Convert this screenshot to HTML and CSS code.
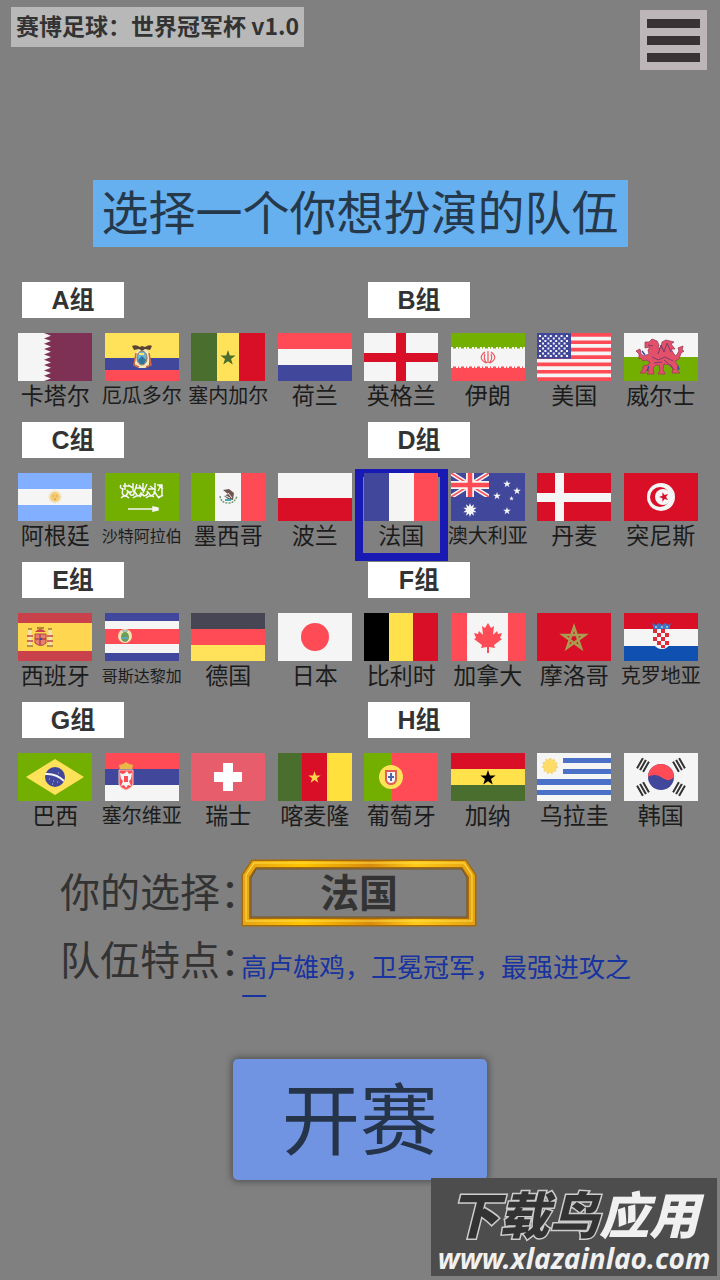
FILE: index.html
```html
<!DOCTYPE html>
<html lang="zh-CN">
<head>
    <meta charset="UTF-8">
    <meta name="viewport" content="width=device-width, initial-scale=1.0">
    <title>赛博足球：世界冠军杯</title>
    <link rel="stylesheet" href="styles.css">
</head>
<body>
    <!-- shared shapes for the flags -->
    <svg class="defs" aria-hidden="true">
        <symbol id="star" viewBox="-10 -10 20 20">
            <path d="M0-10 2.3-3.2 9.5-3.1 3.8 1.2 5.9 8.1 0 4-5.9 8.1-3.8 1.2-9.5-3.1-2.3-3.2Z"/>
        </symbol>
        <symbol id="trigram" viewBox="0 0 12 10">
            <path d="M0 1.5h12M0 5h12M0 8.5h12" stroke="#333" stroke-width="2"/>
        </symbol>
    </svg>

    <header class="topbar">
        <div class="version">赛博足球：世界冠军杯 v1.0</div>
        <button class="menu" type="button" aria-label="菜单">
            <span></span><span></span><span></span>
        </button>
    </header>

    <main>
        <h1 class="title">选择一个你想扮演的队伍</h1>

        <div class="groups">
            <section class="group">
                <h2>A组</h2>
                <div class="teams">
                    <button class="team" type="button">
                        <svg class="flag" viewBox="0 0 74 48"><path fill="#f5f5f5" d="M0 0h74v48H0z"/><path fill="#7f3055" d="M74 0H26l7 2.7-7 2.7 7 2.7-7 2.6 7 2.7-7 2.6 7 2.7-7 2.7 7 2.6-7 2.7 7 2.7-7 2.6 7 2.7-7 2.7 7 2.6-7 2.7 7 2.7-7 2.6H74z"/></svg>
                        <span>卡塔尔</span>
                    </button>
                    <button class="team" type="button">
                        <svg class="flag" viewBox="0 0 74 48"><path fill="#ffe15a" d="M0 0h74v25H0z"/><path fill="#41479b" d="M0 25h74v12H0z"/><path fill="#ff4b55" d="M0 37h74v11H0z"/><path fill="#f3e6c0" d="M30 21l4-5h7l4 5-1 12-4 2h-6l-4-2z"/><path d="M27 13q4-2 8 1l2-1 3 1q4-3 7-1l-2 4-5-1-3 2-3-2-5 1z" fill="#594437"/><path d="M31 20l-2 12 5 2M44 20l2 12-5 2" fill="none" stroke="#d06642" stroke-width="1.5"/><ellipse cx="37" cy="25" rx="5" ry="7" fill="#69b5dc" stroke="#967443" stroke-width="1"/><path d="M33 27l4-4 4 4-2 4h-4z" fill="#31739a"/><path d="M34 21h5" stroke="#ffe15a" stroke-width="2"/></svg>
                        <span class="len4">厄瓜多尔</span>
                    </button>
                    <button class="team" type="button">
                        <svg class="flag" viewBox="0 0 74 48"><path fill="#496e2d" d="M0 0h26v48H0z"/><path fill="#ffe15a" d="M26 0h22v48H26z"/><path fill="#d80f27" d="M48 0h26v48H48z"/><use href="#star" x="29" y="17" width="16" height="16" fill="#496e2d"/></svg>
                        <span class="len4">塞内加尔</span>
                    </button>
                    <button class="team" type="button">
                        <svg class="flag" viewBox="0 0 74 48"><path fill="#ff4b55" d="M0 0h74v16H0z"/><path fill="#f5f5f5" d="M0 16h74v16H0z"/><path fill="#41479b" d="M0 32h74v16H0z"/></svg>
                        <span>荷兰</span>
                    </button>
                </div>
            </section>

            <section class="group">
                <h2>B组</h2>
                <div class="teams">
                    <button class="team" type="button">
                        <svg class="flag" viewBox="0 0 74 48"><path fill="#f5f5f5" d="M0 0h74v48H0z"/><path fill="#d80f27" d="M32 0h10v48H32zM0 20h74v9H0z"/></svg>
                        <span>英格兰</span>
                    </button>
                    <button class="team" type="button">
                        <svg class="flag" viewBox="0 0 74 48"><path fill="#f5f5f5" d="M0 0h74v48H0z"/><path fill="#73af00" d="M0 0h74v14H0z"/><path fill="#ff4b55" d="M0 35h74v13H0z"/><path d="M2 14.500h70" stroke="#73af00" stroke-width="2" stroke-dasharray="3 2 1 2"/><path d="M2 34.500h70" stroke="#ff4b55" stroke-width="2" stroke-dasharray="3 2 1 2"/><path d="M37 18v12M34 19q-8 6 1 11M40 19q8 6-1 11M34 21q-2 6 2 9M40 21q2 6-2 9" fill="none" stroke="#ee5960" stroke-width="1.200"/></svg>
                        <span>伊朗</span>
                    </button>
                    <button class="team" type="button">
                        <svg class="flag" viewBox="0 0 74 48"><path fill="#f5f5f5" d="M0 0h74v48H0z"/><path fill="#ff4b55" d="M0 0h74v3.700H0zM0 7.400h74v3.700H0zM0 14.800h74v3.700H0zM0 22.200h74v3.700H0zM0 29.500h74v3.700H0zM0 36.900h74v3.700H0zM0 44.300h74V48H0z"/><path fill="#41479b" d="M0 0h34v25.800H0z"/><path d="M2 3h31M2 8h31M2 13h31M2 18h31M2 23h31" stroke="#f5f5f5" stroke-width="2" stroke-dasharray="2 3.400"/><path d="M5 5.500h26M5 10.500h26M5 15.500h26M5 20.500h26" stroke="#f5f5f5" stroke-width="1.800" stroke-dasharray="2 3.400"/></svg>
                        <span>美国</span>
                    </button>
                    <button class="team" type="button">
                        <svg class="flag" viewBox="0 0 74 48"><path fill="#f5f5f5" d="M0 0h74v24H0z"/><path fill="#73af00" d="M0 24h74v24H0z"/><path fill="#e3506a" stroke="#a03a58" stroke-width=".8" d="M21 9l4 0 3-3 5 2 2 4-1 3 3 0 1-6 4-2 8 2-3 2 4 5-4 0 3 5 2 2 3-5-1-3 5-2-1 4 2 1-3 2-2 6-4 2 3 5-1 4 3 3h-8l1-4-4-4-5-1-1 5 2 5h-7l2-4-1-5-3 0-3 3 1 6h-7l2-3-1-2-3 4h-5l3-4 0-3 5-1 2-3-4-2-3 1-2-3-2 1 0-5-3-3 4-2 1 5 3 2 5-2-1-4 2-3-5 1z"/><path d="M34 21l3-9 3 7 3-9 4 9M28 24l6 3 7-3 8 4M24 12l5 1M30 30l8-1M46 31l4 6M40 27l5 4" stroke="#7e3a6a" fill="none"/><path d="M18 18l3 4M25 33l-2 5M54 33l1 4" stroke="#41479b" stroke-width="1.500"/></svg>
                        <span>威尔士</span>
                    </button>
                </div>
            </section>

            <section class="group">
                <h2>C组</h2>
                <div class="teams">
                    <button class="team" type="button">
                        <svg class="flag" viewBox="0 0 74 48"><path fill="#82afff" d="M0 0h74v48H0z"/><path fill="#f5f5f5" d="M0 16h74v16H0z"/><circle cx="37" cy="24" r="5" fill="#f2cb72"/><circle cx="37" cy="24" r="6" fill="none" stroke="#f2cb72" stroke-dasharray="1 1"/><path d="M35 23h1M38 23h1M36 26h2" stroke="#c88d36"/></svg>
                        <span>阿根廷</span>
                    </button>
                    <button class="team" type="button">
                        <svg class="flag" viewBox="0 0 74 48"><path fill="#73af00" d="M0 0h74v48H0z"/><g fill="none" stroke="#f5f5f5" stroke-width="1.500"><path d="M16 12q-2 3 2 4-2 6 2 7 4-2 2-6l4 5q4 1 3-4l3 4q3 2 4-2l3 3q5-1 3-5l4 5q4-1 3-5l4 6 4-1V12M20 10v7M23 12l5 3M28 10v9M32 11l-3 9M34 12l4 6M38 10v8M42 11l-4 9M45 13l5 4M50 10v11M54 13l4 3M57 11l-4 7M16 25q4-4 8 0M28 25q5-4 8-1M41 25q4-4 8-1M53 25l5-3M18 13h6M31 15h5M43 16h5M52 12h4M34 22h5M24 19h3"/><path d="M23 36h27"/><path d="M48 34v4l5-1v-2z" fill="#f5f5f5"/></g></svg>
                        <span class="len5">沙特阿拉伯</span>
                    </button>
                    <button class="team" type="button">
                        <svg class="flag" viewBox="0 0 74 48"><path fill="#73af00" d="M0 0h24v48H0z"/><path fill="#f5f5f5" d="M24 0h26v48H24z"/><path fill="#ff4b55" d="M50 0h24v48H50z"/><path d="M32 17l6-1 5 4-1 7-5-1-4-3 4-2z" fill="#6d5550"/><path d="M37 20l4 5M33 22l6 3" stroke="#eee"/><path d="M29 23q1 7 8 7t9-7" fill="none" stroke="#719c74" stroke-width="1.500" stroke-dasharray="2 1"/><path d="M34 27h6" stroke="#45a7b0" stroke-width="2"/></svg>
                        <span>墨西哥</span>
                    </button>
                    <button class="team" type="button">
                        <svg class="flag" viewBox="0 0 74 48"><path fill="#f5f5f5" d="M0 0h74v25H0z"/><path fill="#d80f27" d="M0 25h74v23H0z"/></svg>
                        <span>波兰</span>
                    </button>
                </div>
            </section>

            <section class="group">
                <h2>D组</h2>
                <div class="teams">
                    <button class="team selected" type="button" aria-pressed="true">
                        <svg class="flag" viewBox="0 0 74 48"><path fill="#41479b" d="M0 0h25v48H0z"/><path fill="#f5f5f5" d="M25 0h25v48H25z"/><path fill="#ff4b55" d="M50 0h24v48H50z"/></svg>
                        <span>法国</span>
                    </button>
                    <button class="team" type="button">
                        <svg class="flag" viewBox="0 0 74 48"><path fill="#41479b" d="M0 0h74v48H0z"/><svg width="38" height="24" viewBox="0 0 38 24"><path d="M0 0l38 24M38 0L0 24" stroke="#f5f5f5" stroke-width="4.500"/><path d="M0 0l38 24M38 0L0 24" stroke="#ff4b55" stroke-width="1.500"/><path d="M19 0v24M0 12h38" stroke="#f5f5f5" stroke-width="8"/><path d="M19 0v24M0 12h38" stroke="#ff4b55" stroke-width="4.500"/></svg><g fill="#f5f5f5"><use href="#star" x="12" y="30" width="14" height="14"/><use href="#star" transform="rotate(36 19 37)" x="12" y="30" width="14" height="14"/><use href="#star" x="52" y="7" width="8" height="8"/><use href="#star" x="42" y="19" width="8" height="8"/><use href="#star" x="62" y="14" width="8" height="8"/><use href="#star" x="58" y="23" width="5" height="5"/><use href="#star" x="52" y="34" width="8" height="8"/></g></svg>
                        <span class="len4">澳大利亚</span>
                    </button>
                    <button class="team" type="button">
                        <svg class="flag" viewBox="0 0 74 48"><path fill="#d80f27" d="M0 0h74v48H0z"/><path fill="#f5f5f5" d="M18 0h9v48h-9zM0 20h74v9H0z"/></svg>
                        <span>丹麦</span>
                    </button>
                    <button class="team" type="button">
                        <svg class="flag" viewBox="0 0 74 48"><path fill="#d80f27" d="M0 0h74v48H0z"/><circle cx="37" cy="24" r="14" fill="#f5f5f5"/><circle cx="36" cy="24" r="10" fill="#d80f27"/><circle cx="39" cy="24" r="8" fill="#f5f5f5"/><use href="#star" transform="rotate(-18 40 24)" x="35" y="19" width="10" height="10" fill="#d80f27"/></svg>
                        <span>突尼斯</span>
                    </button>
                </div>
            </section>

            <section class="group">
                <h2>E组</h2>
                <div class="teams">
                    <button class="team" type="button">
                        <svg class="flag" viewBox="0 0 74 48"><path fill="#c8414b" d="M0 0h74v48H0z"/><path fill="#ffd64f" d="M0 10h74v28H0z"/><path d="M17 21h11v9q-5 5-11 0z" fill="#e58072" stroke="#b4464c"/><path d="M22 21v11M17 26h11" stroke="#b4464c" stroke-width="1.500"/><path d="M17 19q5-6 11 0z" fill="#c8414b"/><path d="M19 15h7" stroke="#b18436" stroke-width="2"/><path d="M12 17v16M32 17v16" stroke="#efe4b8" stroke-width="3"/><path d="M9 23h6M9 28h6M29 23h6M29 28h6" stroke="#c8414b" stroke-width="1.500"/><path d="M9 33h6M29 33h6M10 16h4M30 16h4" stroke="#a07940" stroke-width="1.500"/><path d="M22 25h2v2h-2z" fill="#41479b"/></svg>
                        <span>西班牙</span>
                    </button>
                    <button class="team" type="button">
                        <svg class="flag" viewBox="0 0 74 48"><path fill="#41479b" d="M0 0h74v48H0z"/><path fill="#f5f5f5" d="M0 8h74v32H0z"/><path fill="#ff4b55" d="M0 16h74v15H0z"/><circle cx="20" cy="23" r="7" fill="#f1e5b1"/><ellipse cx="20" cy="24" rx="4" ry="5" fill="#6d9d58"/><path d="M17 25h6" stroke="#59a9c5" stroke-width="2"/><path d="M17 18h6" stroke="#739fc1"/></svg>
                        <span class="len5">哥斯达黎加</span>
                    </button>
                    <button class="team" type="button">
                        <svg class="flag" viewBox="0 0 74 48"><path fill="#464655" d="M0 0h74v16H0z"/><path fill="#ff4b55" d="M0 16h74v16H0z"/><path fill="#ffe15a" d="M0 32h74v16H0z"/></svg>
                        <span>德国</span>
                    </button>
                    <button class="team" type="button">
                        <svg class="flag" viewBox="0 0 74 48"><path fill="#f5f5f5" d="M0 0h74v48H0z"/><circle cx="37" cy="24" r="14" fill="#ff4b55"/></svg>
                        <span>日本</span>
                    </button>
                </div>
            </section>

            <section class="group">
                <h2>F组</h2>
                <div class="teams">
                    <button class="team" type="button">
                        <svg class="flag" viewBox="0 0 74 48"><path d="M0 0h25v48H0z"/><path fill="#ffe14b" d="M25 0h24v48H25z"/><path fill="#d80f27" d="M49 0h25v48H49z"/></svg>
                        <span>比利时</span>
                    </button>
                    <button class="team" type="button">
                        <svg class="flag" viewBox="0 0 74 48"><path fill="#ff4b55" d="M0 0h74v48H0z"/><path fill="#f5f5f5" d="M16 0h41v48H16z"/><path fill="#ff4b55" d="M37 10l3 5 3-2-1 9 4-4 1 3 4-1-2 5 2 1-8 6 1 3-6-1v6h-2v-6l-6 1 1-3-8-6 2-1-2-5 4 1 1-3 4 4-1-9 3 2z"/></svg>
                        <span>加拿大</span>
                    </button>
                    <button class="team" type="button">
                        <svg class="flag" viewBox="0 0 74 48"><path fill="#d80f27" d="M0 0h74v48H0z"/><path d="M37 14l7 21-18-13h22L30 35z" fill="none" stroke="#a99b50" stroke-width="2.500"/></svg>
                        <span>摩洛哥</span>
                    </button>
                    <button class="team" type="button">
                        <svg class="flag" viewBox="0 0 74 48"><path fill="#d80f27" d="M0 0h74v16H0z"/><path fill="#f5f5f5" d="M0 16h74v17H0z"/><path fill="#0f50b0" d="M0 33h74v15H0z"/><path fill="#f5f5f5" d="M29 16h17v14q-2 6-8 6t-9-6z"/><path fill="#e02b3c" d="M29 16h4v4h-4zM37 16h4v4h-4zM33 20h4v4h-4zM41 20h4v4h-4zM29 24h4v4h-4zM37 24h4v4h-4zM33 28h4v4h-4zM41 28h4v4h-4zM37 32h4v3h-4z"/><path d="M28 10l4 2 3-2 3 2 3-2 3 2 3-2-2 6H30z" fill="#3c75c7"/><path d="M31 14h2M37 14h2M42 14h2" stroke="#9fb8ca" stroke-width="2"/></svg>
                        <span class="len4">克罗地亚</span>
                    </button>
                </div>
            </section>

            <section class="group">
                <h2>G组</h2>
                <div class="teams">
                    <button class="team" type="button">
                        <svg class="flag" viewBox="0 0 74 48"><path fill="#73af00" d="M0 0h74v48H0z"/><path fill="#ffe15a" d="M37 6l29 18-29 18L8 24z"/><circle cx="37" cy="24" r="10" fill="#41479b"/><path d="M27 21q11-1 19 7" fill="none" stroke="#f5f5f5" stroke-width="2"/><path d="M31 26h1M35 28h1M39 29h1M34 31h1M40 20h1" stroke="#c2c6e4"/></svg>
                        <span>巴西</span>
                    </button>
                    <button class="team" type="button">
                        <svg class="flag" viewBox="0 0 74 48"><path fill="#ff4b55" d="M0 0h74v16H0z"/><path fill="#41479b" d="M0 16h74v16H0z"/><path fill="#f5f5f5" d="M0 32h74v16H0z"/><path fill="#ff4b55" stroke="#f4ccb9" d="M14 17h14v14q-1 4-7 6-6-2-7-6z"/><path fill="#f5f5f5" d="M20 20l2-2 2 3 3-1-1 6-2 2 2 5-3-1-2 3-2-3-3 1 2-5-2-2-1-6 3 1z"/><path fill="#ff4b55" d="M19 23h4v6h-4z"/><path d="M15 16l-1-4 4-1 3-2 3 2 4 1-1 4z" fill="#e9b847"/></svg>
                        <span class="len4">塞尔维亚</span>
                    </button>
                    <button class="team" type="button">
                        <svg class="flag" viewBox="0 0 74 48"><rect width="74" height="48" rx="2" fill="#e85d6b"/><path fill="#fff" d="M32 10h10v9h9v10h-9v9H32v-9h-9V19h9z"/></svg>
                        <span>瑞士</span>
                    </button>
                    <button class="team" type="button">
                        <svg class="flag" viewBox="0 0 74 48"><path fill="#496e2d" d="M0 0h24v48H0z"/><path fill="#d80f27" d="M24 0h25v48H24z"/><path fill="#ffe03c" d="M49 0h25v48H49z"/><use href="#star" x="30" y="18" width="13" height="13" fill="#ffd34c"/></svg>
                        <span>喀麦隆</span>
                    </button>
                </div>
            </section>

            <section class="group">
                <h2>H组</h2>
                <div class="teams">
                    <button class="team" type="button">
                        <svg class="flag" viewBox="0 0 74 48"><path fill="#73af00" d="M0 0h28v48H0z"/><path fill="#ff4b55" d="M28 0h46v48H28z"/><circle cx="27" cy="24" r="12" fill="#ffe15a"/><path d="M22 18h10v9q-1 4-5 4t-5-4z" fill="#f5f5f5" stroke="#e45a54" stroke-width="2"/><path d="M27 20v8M24 24h6" stroke="#4b65a9" stroke-width="2"/></svg>
                        <span>葡萄牙</span>
                    </button>
                    <button class="team" type="button">
                        <svg class="flag" viewBox="0 0 74 48"><path fill="#d80f27" d="M0 0h74v16H0z"/><path fill="#ffe14b" d="M0 16h74v16H0z"/><path fill="#496e2d" d="M0 32h74v16H0z"/><use href="#star" x="29" y="17" width="16" height="16"/></svg>
                        <span>加纳</span>
                    </button>
                    <button class="team" type="button">
                        <svg class="flag" viewBox="0 0 74 48"><path fill="#f5f5f5" d="M0 0h74v48H0z"/><path fill="#4a70c8" d="M26 5h48v5H26zM26 16h48v5H26zM0 26h74v6H0zM0 37h74v5H0z"/><circle cx="13" cy="13" r="7" fill="#ffdc68"/><circle cx="13" cy="13" r="7" fill="none" stroke="#f2d57b" stroke-width="2" stroke-dasharray="2 2"/></svg>
                        <span>乌拉圭</span>
                    </button>
                    <button class="team" type="button">
                        <svg class="flag" viewBox="0 0 74 48"><path fill="#f5f5f5" d="M0 0h74v48H0z"/><circle cx="37" cy="24" r="13" fill="#41479b"/><path fill="#ff4b55" d="M24 24a13 13 0 0 1 26 0q-3 4-7 3-3-1-6-3t-6-2q-5 0-7 2z"/><use href="#trigram" transform="rotate(-60 19 12)" x="13" y="7" width="12" height="10"/><use href="#trigram" transform="rotate(60 55 12)" x="49" y="7" width="12" height="10"/><use href="#trigram" transform="rotate(60 19 36)" x="13" y="31" width="12" height="10"/><use href="#trigram" transform="rotate(-60 55 36)" x="49" y="31" width="12" height="10"/></svg>
                        <span>韩国</span>
                    </button>
                </div>
            </section>
        </div>

        <dl class="choice">
            <dt>你的选择：</dt>
            <dd class="picked">
                <svg class="frame" viewBox="0 0 235 68" preserveAspectRatio="none" aria-hidden="true">
                    <defs>
                        <linearGradient id="gold" x1="0" x2="1" y1="0" y2="0">
                            <stop offset="0" stop-color="#e6a515"/>
                            <stop offset=".25" stop-color="#ffc400"/>
                            <stop offset=".55" stop-color="#d98b0c"/>
                            <stop offset=".75" stop-color="#ffca18"/>
                            <stop offset="1" stop-color="#e5a313"/>
                        </linearGradient>
                    </defs>
                    <path d="M13 5h209l8 12v46H5V17z" fill="none" stroke="#a56a0c" stroke-width="9"/>
                    <path d="M13 5h209l8 12v46H5V17z" fill="none" stroke="url(#gold)" stroke-width="6"/>
                    <path d="M13 4h209l8 12v46H5V16z" fill="none" stroke="#ffe04a" stroke-width="1"/>
                    <path d="M15 10h205l5 9v39H10V19z" fill="none" stroke="#77551d" stroke-width="1"/>
                </svg>
                <strong>法国</strong>
            </dd>
            <dt>队伍特点：</dt>
            <dd class="trait">高卢雄鸡，卫冕冠军，最强进攻之一</dd>
        </dl>

        <button class="start" type="button">开赛</button>
    </main>

    <div class="watermark">
        <div class="mark-name"><span>下载鸟</span>应用</div>
        <div class="mark-url">www.xlazainlao.com</div>
    </div>
</body>
</html>
```

FILE: styles.css
```css
* {
    box-sizing: border-box;
}
body {
    position: relative;
    margin: 0;
    min-height: 100vh;
    background: #808080;
    color: #333;
    font-family: "Noto Sans CJK SC", sans-serif;
}
button {
    padding: 0;
    border: none;
    background: none;
    color: inherit;
    font-family: inherit;
    cursor: pointer;
}
.defs {
    display: none;
}

/* top bar */
.topbar {
    display: flex;
    justify-content: space-between;
    align-items: flex-start;
    height: 180px;
    padding: 7px 13px 0 11px;
}
.version {
    padding: 0 5px 4px;
    background: #b8b8b8;
    font-size: 23px;
    font-weight: bold;
    line-height: 36px;
}
.menu {
    display: flex;
    flex-direction: column;
    justify-content: center;
    gap: 8px;
    width: 67px;
    height: 60px;
    margin-top: 3px;
    padding: 0 7px;
    background: #bdb6b8;
}
.menu span {
    height: 9px;
    background: #393335;
}

.title {
    width: fit-content;
    margin: 0 auto 35px;
    padding: 0 9px 8px;
    background: #66b0f0;
    color: #26394a;
    font-size: 47px;
    font-weight: normal;
    line-height: 59px;
}

/* team picker */
.groups {
    display: grid;
    grid-template-columns: 1fr 1fr;
    row-gap: 13px;
    padding: 0 16px 0 12px;
}
.group h2 {
    width: 102px;
    margin: 0 0 15px 10px;
    background: #fff;
    font-family: "Liberation Sans", "Noto Sans CJK SC", sans-serif;
    font-size: 25px;
    line-height: 36px;
    text-align: center;
}
.teams {
    display: grid;
    grid-template-columns: repeat(4, 1fr);
    height: 76px;
}
.team {
    position: relative;
    display: flex;
    flex-direction: column;
    align-items: center;
    color: #1c1c1c;
    font-size: 23px;
    line-height: 26px;
    white-space: nowrap;
}
.team .len4 {
    font-size: 20px;
    line-height: 28px;
}
.team .len5 {
    font-size: 16px;
    line-height: 28px;
}
.flag {
    position: relative;
    display: block;
    width: 74px;
    height: 48px;
}
.selected::before {
    content: "";
    position: absolute;
    inset: -4px -3px -12px;
    border: 8px solid #1919b4;
}

/* current choice */
.choice {
    display: grid;
    grid-template-columns: 181px 1fr;
    margin: 30px 80px 0 60px;
}
.choice dt {
    font-size: 40px;
    line-height: 62px;
    white-space: nowrap;
}
.choice dd {
    margin: 0;
}
.picked {
    position: relative;
    width: 236px;
    height: 68px;
    text-align: center;
}
.picked strong {
    position: relative;
    font-size: 39px;
    line-height: 62px;
}
.frame {
    position: absolute;
    inset: 0;
    width: 100%;
    height: 100%;
}
.trait {
    padding-top: 24px;
    color: #1733a0;
    font-size: 26px;
    line-height: 29px;
}

.start {
    display: block;
    width: 254px;
    margin: 50px auto 0;
    padding-bottom: 8px;
    border-radius: 5px;
    background: #7094e2;
    box-shadow: 0 0 6px 2px #555;
    color: #26344a;
    font-size: 78px;
    line-height: 113px;
}

/* site mark in the corner */
.watermark {
    position: absolute;
    right: 3px;
    bottom: 4px;
    width: 286px;
    height: 98px;
    padding-top: 12px;
    background: #4d4d4d;
    color: #f0f0f0;
    text-align: center;
    white-space: nowrap;
}
.mark-name {
    font-size: 50px;
    font-style: italic;
    font-weight: 900;
    line-height: 44px;
}
.mark-name span {
    color: #333;
    -webkit-text-stroke: 3px #ccc;
    paint-order: stroke fill;
}
.mark-url {
    margin-top: 8px;
    font-family: "Noto Sans", sans-serif;
    font-size: 28px;
    font-style: italic;
    font-weight: bold;
    line-height: 32px;
}
```
